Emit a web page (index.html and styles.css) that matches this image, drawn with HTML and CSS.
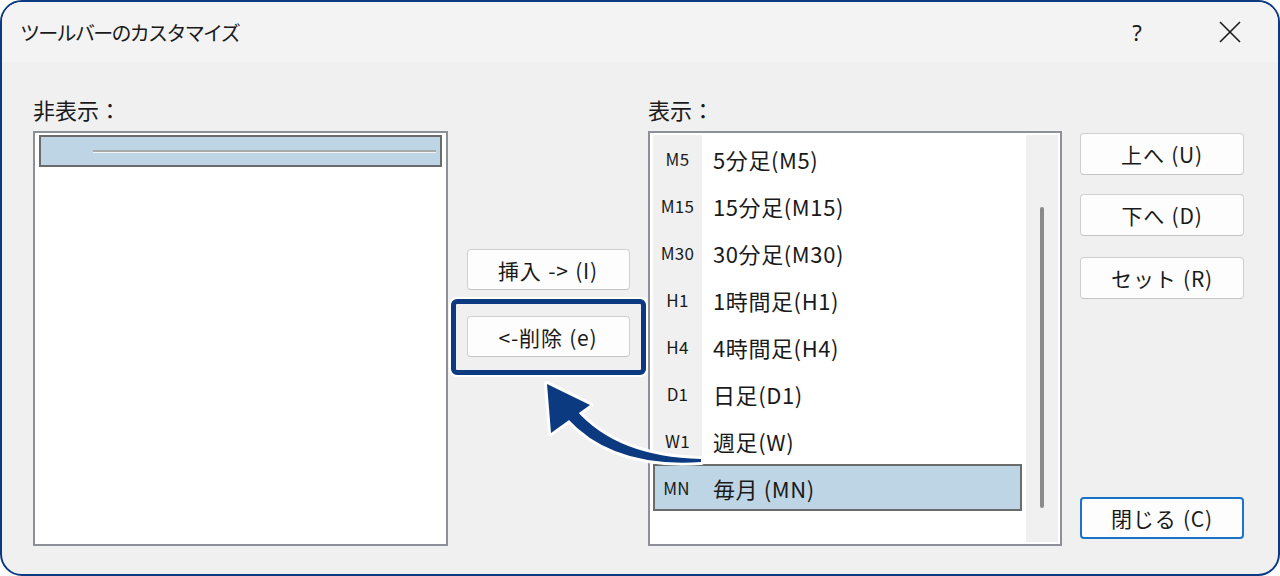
FILE: index.html
```html
<!DOCTYPE html>
<html>
<head>
  <meta charset="UTF-8">
  <title>ツールバーのカスタマイズ</title>
  <link rel="stylesheet" href="styles.css">
</head>
<body>
  <div class="window">
    <div class="titlebar">
      <span class="title">ツールバーのカスタマイズ</span>
      <span class="help">?</span>
      <span class="close">
        <svg width="22" height="22" viewBox="0 0 22 22"><path d="M1 1 L21 21 M21 1 L1 21" stroke="#1a1a1a" stroke-width="1.6" fill="none"/></svg>
      </span>
    </div>

    <div class="content">
      <div class="panel panel-left">
        <div class="label">非表示：</div>
        <div class="listbox">
          <div class="sep-row"><span class="sep-line"></span></div>
        </div>
      </div>

      <div class="middle">
        <button class="btn">挿入 -&gt; (I)</button>
        <div class="focus-box">
          <button class="btn">&lt;-削除 (e)</button>
        </div>
      </div>

      <div class="panel panel-right">
        <div class="label">表示：</div>
        <div class="listbox list-shown">
          <div class="items">
            <div class="row"><span class="tag">M5</span><span class="name">5分足(M5)</span></div>
            <div class="row"><span class="tag">M15</span><span class="name">15分足(M15)</span></div>
            <div class="row"><span class="tag">M30</span><span class="name">30分足(M30)</span></div>
            <div class="row"><span class="tag">H1</span><span class="name">1時間足(H1)</span></div>
            <div class="row"><span class="tag">H4</span><span class="name">4時間足(H4)</span></div>
            <div class="row"><span class="tag">D1</span><span class="name">日足(D1)</span></div>
            <div class="row"><span class="tag">W1</span><span class="name">週足(W)</span></div>
            <div class="row row-sel"><span class="tag">MN</span><span class="name">毎月 (MN)</span></div>
          </div>
          <div class="scroll"><div class="thumb"></div></div>
        </div>
      </div>

      <div class="side">
        <button class="btn btn-up">上へ (U)</button>
        <button class="btn btn-down">下へ (D)</button>
        <button class="btn btn-set">セット (R)</button>
        <button class="btn btn-close">閉じる (C)</button>
      </div>
    </div>

    <svg class="arrow" width="1280" height="576" viewBox="0 0 1280 576">
      <g fill="none" stroke="#fff" stroke-width="6" stroke-linejoin="round">
        <path d="M701 459 Q617 457 576 410 L567 418 Q612 468 701 462 Z"/>
        <path d="M547 384 L590 405 L551 433 Z"/>
      </g>
      <g fill="#0c3a80">
        <path d="M701 459 Q617 457 576 410 L567 418 Q612 468 701 462 Z"/>
        <path d="M547 384 L590 405 L551 433 Z"/>
      </g>
    </svg>
  </div>
</body>
</html>
```

FILE: styles.css
```css
body {
  margin: 0;
  font-family: "Noto Sans CJK JP", "Noto Sans", sans-serif;
  color: #1a1a1a;
  background-color: #fff;
}
.window {
  position: relative;
  box-sizing: border-box;
  width: 1280px;
  height: 576px;
  border: 2px solid #0c3a80;
  border-radius: 22px;
  background-color: #f0f0f0;
  overflow: hidden;
}
.titlebar {
  display: flex;
  align-items: center;
  height: 60px;
  background-color: #f3f3f3;
}
.title {
  flex: 1;
  padding-left: 18px;
  font-size: 20px;
  letter-spacing: -1.7px;
}
.help {
  width: 40px;
  text-align: center;
  font-size: 22px;
  font-family: "Noto Sans", sans-serif;
}
.close {
  display: flex;
  justify-content: center;
  width: 46px;
  margin-left: 50px;
  margin-right: 25px;
}
.content {
  display: flex;
  padding: 36px 0 0 31px;
}
.label {
  height: 22px;
  line-height: 22px;
  font-size: 22px;
  margin-bottom: 11px;
}
.panel-left {
  width: 415px;
}
.panel-right {
  width: 414px;
}
.listbox {
  box-sizing: border-box;
  height: 415px;
  border: 2px solid #8d9097;
  background-color: #fff;
}
.panel-left .listbox {
  padding: 2px 4px;
}
.sep-row {
  box-sizing: border-box;
  height: 32px;
  border: 2px solid #6b6b6b;
  background-color: #bed5e5;
  padding: 13px 4px 0 52px;
}
.sep-line {
  display: block;
  height: 2px;
  background-color: #a9a9a9;
  border-bottom: 1px solid #f4f4f4;
}
.middle {
  width: 200px;
  display: flex;
  flex-direction: column;
  align-items: center;
  padding-top: 151px;
}
.btn {
  box-sizing: border-box;
  width: 163px;
  height: 41px;
  padding: 0;
  border: 1px solid #d0d0d0;
  border-bottom-color: #c4c4c4;
  border-radius: 4px;
  background-color: #fdfdfd;
  color: #1a1a1a;
  font-family: "Noto Sans CJK JP", "Noto Sans", sans-serif;
  font-size: 21px;
  letter-spacing: 0.8px;
  word-spacing: 1px;
}
.focus-box {
  box-sizing: border-box;
  width: 195px;
  height: 76px;
  margin-top: 9px;
  padding: 12px 10px 0 11px;
  border: 5px solid #0c3a80;
  border-radius: 6px;
  box-shadow: 0 0 0 2px #fff;
  background-color: #f0f0f0;
}
.list-shown {
  display: flex;
  padding: 2px 2px 2px 3px;
}
.items {
  width: 373px;
}
.row {
  display: flex;
  align-items: center;
  height: 47px;
  background: linear-gradient(to right, #f0f0f0 49px, #fff 49px);
}
.tag {
  width: 49px;
  text-align: center;
  font-size: 17px;
  letter-spacing: 0.3px;
}
.name {
  padding-left: 11px;
  font-size: 22px;
  letter-spacing: 0.6px;
}
.row-sel {
  box-sizing: border-box;
  width: 369px;
  border: 2px solid #6b6b6b;
  background: #bed5e5;
}
.row-sel .tag {
  width: 47px;
  margin-left: -2px;
}
.row-sel .name {
  padding-left: 13px;
}
.scroll {
  width: 32px;
  background-color: #f0f0f0;
  padding-top: 72px;
  display: flex;
  justify-content: center;
}
.thumb {
  width: 4px;
  height: 301px;
  border-radius: 2px;
  background-color: #8a8a8a;
}
.side {
  display: flex;
  flex-direction: column;
  margin-left: 18px;
}
.side .btn {
  width: 164px;
  height: 42px;
}
.btn-up {
  margin-top: 35px;
}
.btn-down {
  margin-top: 19px;
}
.btn-set {
  margin-top: 21px;
}
.btn-close {
  margin-top: 198px;
  border: 2px solid #1a73c8;
}
.arrow {
  position: absolute;
  top: -2px;
  left: -2px;
  pointer-events: none;
}
```
